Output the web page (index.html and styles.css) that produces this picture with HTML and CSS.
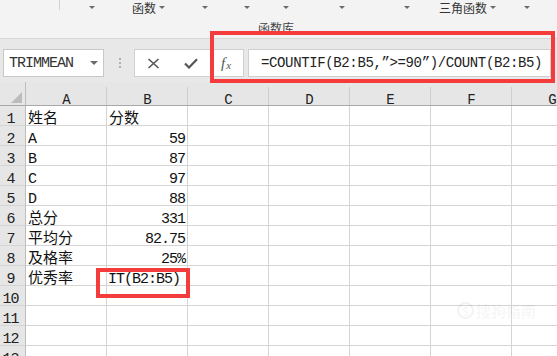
FILE: index.html
```html
<!DOCTYPE html>
<html lang="zh">
<head>
<meta charset="utf-8">
<title>WPS 表格</title>
<link rel="stylesheet" href="styles.css">
</head>
<body>
<div class="app">
  <div class="ribbon">
    <div class="rib-row">
      <span class="vsep"></span>
      <span class="arr"></span>
      <span class="rlbl">函数</span>
      <span class="arr"></span>
      <span class="arr"></span>
      <span class="arr"></span>
      <span class="arr"></span>
      <span class="arr"></span>
      <span class="arr"></span>
      <span class="rlbl">三角函数</span>
      <span class="arr"></span>
      <span class="arr"></span>
    </div>
    <div class="rib-group">函数库</div>
  </div>

  <div class="fbar">
    <div class="namebox">
      <span class="nb-text">TRIMMEAN</span>
      <span class="nb-arr"></span>
    </div>
    <div class="dots"><i></i><i></i><i></i></div>
    <div class="btns">
      <span class="btn">
        <svg width="13" height="11" viewBox="0 0 13 11"><path d="M1.5 1 L11.5 10 M11.5 1 L1.5 10" stroke="#555" stroke-width="1.6" fill="none"/></svg>
      </span>
      <span class="btn">
        <svg width="14" height="11" viewBox="0 0 14 11"><path d="M1 5.5 L5 9.5 L13 1.2" stroke="#555" stroke-width="2.2" fill="none"/></svg>
      </span>
      <span class="btn fx"><i>f</i><i class="x">x</i></span>
    </div>
    <div class="formula">=COUNTIF(B2:B5,”&gt;=90”)/COUNT(B2:B5)</div>
  </div>

  <div class="sheet">
    <div class="corner"><span class="tri"></span></div>
    <div class="ch">A</div><div class="ch">B</div><div class="ch">C</div><div class="ch">D</div><div class="ch">E</div><div class="ch">F</div><div class="ch">G</div>

    <div class="rh">1</div><div class="c zh">姓名</div><div class="c zh">分数</div><div class="c"></div><div class="c"></div><div class="c"></div><div class="c"></div><div class="c"></div>
    <div class="rh">2</div><div class="c">A</div><div class="c num">59</div><div class="c"></div><div class="c"></div><div class="c"></div><div class="c"></div><div class="c"></div>
    <div class="rh">3</div><div class="c">B</div><div class="c num">87</div><div class="c"></div><div class="c"></div><div class="c"></div><div class="c"></div><div class="c"></div>
    <div class="rh">4</div><div class="c">C</div><div class="c num">97</div><div class="c"></div><div class="c"></div><div class="c"></div><div class="c"></div><div class="c"></div>
    <div class="rh">5</div><div class="c">D</div><div class="c num">88</div><div class="c"></div><div class="c"></div><div class="c"></div><div class="c"></div><div class="c"></div>
    <div class="rh">6</div><div class="c zh">总分</div><div class="c num">331</div><div class="c"></div><div class="c"></div><div class="c"></div><div class="c"></div><div class="c"></div>
    <div class="rh">7</div><div class="c zh">平均分</div><div class="c num">82.75</div><div class="c"></div><div class="c"></div><div class="c"></div><div class="c"></div><div class="c"></div>
    <div class="rh">8</div><div class="c zh">及格率</div><div class="c num">25%</div><div class="c"></div><div class="c"></div><div class="c"></div><div class="c"></div><div class="c"></div>
    <div class="rh">9</div><div class="c zh">优秀率</div><div class="c edit">IT(B2:B5)</div><div class="c"></div><div class="c"></div><div class="c"></div><div class="c"></div><div class="c"></div>
    <div class="rh">10</div><div class="c"></div><div class="c"></div><div class="c"></div><div class="c"></div><div class="c"></div><div class="c"></div><div class="c"></div>
    <div class="rh">11</div><div class="c"></div><div class="c"></div><div class="c"></div><div class="c"></div><div class="c"></div><div class="c"></div><div class="c"></div>
    <div class="rh">12</div><div class="c"></div><div class="c"></div><div class="c"></div><div class="c"></div><div class="c"></div><div class="c"></div><div class="c"></div>
    <div class="rh">13</div><div class="c"></div><div class="c"></div><div class="c"></div><div class="c"></div><div class="c"></div><div class="c"></div><div class="c"></div>
  </div>

  <div class="mark mark-formula"></div>
  <div class="mark mark-cell"></div>
  <div class="watermark"><span class="wm-s">S</span>搜狗指南</div>
</div>
</body>
</html>
```

FILE: styles.css
```css
* { box-sizing: border-box; }
html, body { margin: 0; padding: 0; }
body {
  width: 557px;
  height: 356px;
  overflow: hidden;
  background: #fff;
  font-family: "Liberation Mono", "Noto Sans CJK SC", monospace;
  color: #111;
}
.app {
  position: relative;
  width: 557px;
  height: 356px;
  overflow: hidden;
}

/* ribbon */
.ribbon {
  height: 39px;
  background: #f3f3f3;
  border-bottom: 1px solid #d6d6d6;
}
.rib-row {
  display: flex;
  align-items: center;
  height: 15px;
}
.vsep { width: 1px; height: 10px; background: #d2d2d2; align-self: flex-start; }
.arr {
  width: 0; height: 0;
  border-left: 3px solid transparent;
  border-right: 3px solid transparent;
  border-top: 3px solid #6a6a6a;
}
.rlbl {
  font-family: "Noto Sans CJK SC", sans-serif;
  font-size: 12px;
  line-height: 15px;
  color: #333;
}
.rib-row > :nth-child(1) { margin-left: 59px; }
.rib-row > :nth-child(2) { margin-left: 29px; }
.rib-row > :nth-child(3) { margin-left: 37px; }
.rib-row > :nth-child(4) { margin-left: 3px; }
.rib-row > :nth-child(5) { margin-left: 37px; }
.rib-row > :nth-child(6) { margin-left: 36px; }
.rib-row > :nth-child(7) { margin-left: 33px; }
.rib-row > :nth-child(8) { margin-left: 50px; }
.rib-row > :nth-child(9) { margin-left: 59px; }
.rib-row > :nth-child(10) { margin-left: 29px; }
.rib-row > :nth-child(11) { margin-left: 3px; }
.rib-row > :nth-child(12) { margin-left: 28px; }
.rib-group {
  margin-top: 6px;
  padding-left: 258px;
  font-family: "Noto Sans CJK SC", sans-serif;
  font-size: 12px;
  line-height: 14px;
  color: #444;
}

/* formula bar */
.fbar {
  height: 43px;
  background: #e8e8e8;
  display: flex;
  align-items: flex-start;
  padding: 10px 0 0 3px;
}
.namebox {
  width: 101px;
  height: 28px;
  background: #fff;
  border: 1px solid #c8c8c8;
  display: flex;
  align-items: center;
  padding-left: 5px;
}
.nb-text {
  font-size: 15px;
  letter-spacing: -1px;
  color: #333;
}
.nb-arr {
  margin-left: auto;
  margin-right: 5px;
  width: 0; height: 0;
  border-left: 4px solid transparent;
  border-right: 4px solid transparent;
  border-top: 4px solid #6a6a6a;
}
.dots {
  margin-left: 15px;
  margin-top: 9px;
  display: flex;
  flex-direction: column;
  gap: 2px;
}
.dots i { display: block; width: 2px; height: 2px; background: #b0b0b0; }
.btns {
  margin-left: 13px;
  width: 110px;
  height: 28px;
  background: #fff;
  border: 1px solid #cfcfcf;
  display: flex;
  align-items: center;
}
.btn {
  width: 37px;
  height: 26px;
  display: flex;
  align-items: center;
  justify-content: center;
}
.btn svg { display: block; }
.btn.fx {
  width: 34px;
  font-family: "Liberation Serif", serif;
  font-style: italic;
  color: #555;
  font-size: 15px;
}
.btn.fx i { font-style: italic; }
.btn.fx .x { font-size: 11px; margin-top: 3px; margin-left: 1px; }
.formula {
  margin-left: 4px;
  width: 303px;
  height: 28px;
  background: #fff;
  border: 1px solid #cfcfcf;
  padding-left: 12px;
  font-size: 14px;
  letter-spacing: -0.37px;
  line-height: 26px;
  color: #222;
  white-space: nowrap;
  overflow: hidden;
}

/* sheet grid */
.sheet {
  display: grid;
  grid-template-columns: 26px repeat(7, 81px);
  grid-template-rows: 24px repeat(13, 20px);
}
.corner {
  background: #e6e6e6;
  border-right: 1px solid #bdbdbd;
  border-bottom: 1px solid #a8a8a8;
  display: flex;
  align-items: flex-end;
  justify-content: flex-end;
  padding: 0 3px 2px 0;
}
.tri {
  width: 0; height: 0;
  border-left: 11px solid transparent;
  border-bottom: 11px solid #bcbcbc;
}
.ch {
  background: #e6e6e6 linear-gradient(#cfcfcf, #cfcfcf) right bottom / 1px 18px no-repeat;
  border-bottom: 1px solid #a8a8a8;
  display: flex;
  align-items: flex-end;
  justify-content: center;
  font-size: 14px;
  line-height: 10px;
  color: #222;
}
.rh {
  background: #e6e6e6;
  border-right: 1px solid #bdbdbd;
  border-bottom: 1px solid #d4d4d4;
  display: flex;
  align-items: flex-end;
  justify-content: center;
  padding: 0 4px 0 0;
  font-size: 15px;
  line-height: 10px;
  letter-spacing: -1px;
  color: #222;
}
.c {
  border-right: 1px solid #d4d4d4;
  border-bottom: 1px solid #d4d4d4;
  display: flex;
  align-items: flex-end;
  padding: 0 2px 0 2px;
  font-size: 15px;
  line-height: 10px;
  letter-spacing: -1px;
  white-space: nowrap;
  color: #111;
}
.c.zh {
  font-family: "Noto Sans CJK SC", sans-serif;
  letter-spacing: 0;
  line-height: 17px;
}
.c.num { justify-content: flex-end; padding-right: 2px; }
.c.edit { padding-left: 1px; }

/* annotations */
.mark {
  position: absolute;
  border: 4px solid #f43c3c;
}
.mark-formula { left: 210px; top: 31px; width: 345px; height: 52px; }
.mark-cell { left: 96px; top: 268px; width: 94px; height: 30px; }
.watermark {
  position: absolute;
  left: 457px;
  top: 300px;
  font-family: "Noto Sans CJK SC", sans-serif;
  font-size: 15px;
  font-weight: bold;
  color: rgba(0, 0, 0, 0.05);
  display: flex;
  align-items: center;
  gap: 2px;
}
.wm-s {
  width: 17px; height: 17px;
  border-radius: 50%;
  border: 2px solid rgba(0, 0, 0, 0.05);
  font-size: 11px;
  display: flex;
  align-items: center;
  justify-content: center;
}
```
